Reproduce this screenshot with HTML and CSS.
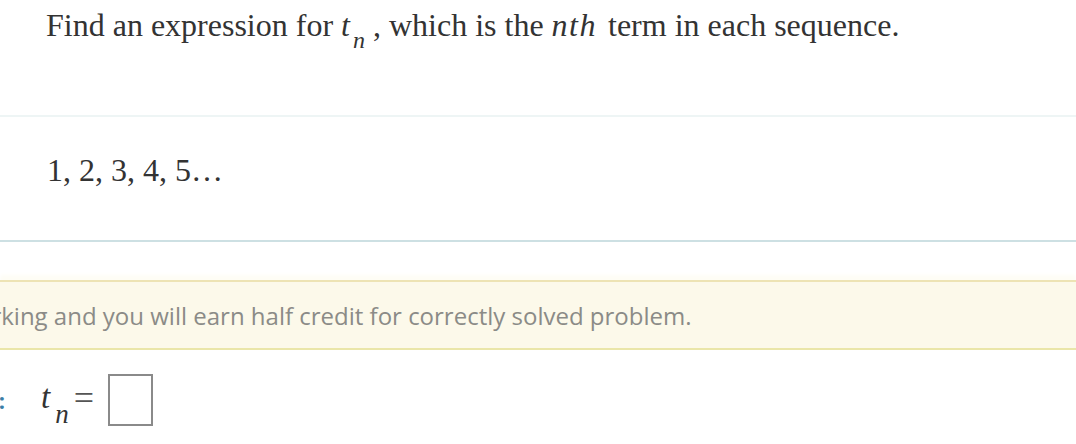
FILE: index.html
```html
<!DOCTYPE html>
<html lang="en">
<head>
    <meta charset="UTF-8">
    <title>Sequence question</title>
    <link rel="stylesheet" href="styles.css">
</head>
<body>

    <div class="question">
        <p class="prompt">Find an expression for <span class="mi">t</span><sub class="sub">n</sub><span class="comma">,</span> which is the <span class="mi spaced">nth</span> term in each sequence.</p>
    </div>

    <div class="sequence">
        <p>1, 2, 3, 4, 5…</p>
    </div>

    <div class="hint">
        <p>Show your working and you will earn half credit for correctly solved problem.</p>
    </div>

    <div class="answer">
        <span class="label">Answer:</span>
        <span class="math"><span class="mi">t</span><sub class="sub low">n</sub></span>
        <span class="eq">=</span>
        <span class="box"></span>
    </div>

</body>
</html>
```

FILE: styles.css
```css
body {
    margin: 0;
    background: #fff;
    color: #333;
    font-family: "Liberation Serif", "Times New Roman", serif;
    overflow: hidden;
}
p {
    margin: 0;
}
.question {
    height: 115px;
    padding-left: 46px;
    border-bottom: 2px solid #eef5f5;
}
.prompt {
    font-size: 32px;
    line-height: 50px;
}
.mi {
    font-style: italic;
}
.spaced {
    letter-spacing: 1.5px;
    margin-right: 3px;
}
.sub {
    font-size: 24px;
    font-style: italic;
    vertical-align: -12px;
    line-height: 0;
    margin-left: 3px;
}
.sub.low {
    font-size: 27px;
    vertical-align: -15px;
    margin-left: 5px;
}
.comma {
    margin-left: 8px;
}
.sequence {
    height: 123px;
    padding-left: 47px;
    border-bottom: 2px solid #cde0e3;
}
.sequence p {
    font-size: 32px;
    line-height: 36px;
    padding-top: 35px;
}
.hint {
    margin-top: 38px;
    height: 66px;
    background: #fcf9ea;
    border-top: 2px solid #ede3b4;
    border-bottom: 2px solid #eae6a9;
    box-shadow: 0 -5px 4px #fefdf5;
    display: flex;
    align-items: center;
    overflow: hidden;
}
.hint p {
    font-family: "Open Sans", sans-serif;
    font-size: 24px;
    color: #8b8b87;
    white-space: nowrap;
    margin-left: -166px;
}
.answer {
    display: flex;
    align-items: center;
    height: 88px;
    padding-top: 6px;
    overflow: hidden;
}
.label {
    font-family: "Open Sans", sans-serif;
    font-weight: bold;
    font-size: 22px;
    color: #3b7ea6;
    margin-left: -88px;
    width: 93px;
    text-align: right;
}
.math {
    font-size: 33px;
    margin-left: 36px;
    padding-bottom: 6px;
}
.eq {
    font-size: 36px;
    color: #555;
    margin-left: 5px;
    padding-bottom: 4px;
}
.box {
    width: 41px;
    height: 48px;
    border: 2px solid #8a8a8a;
    margin-left: 14px;
}
```
